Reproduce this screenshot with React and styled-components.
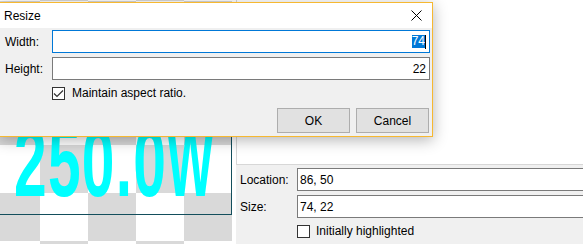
import React from "react";
import styled, { createGlobalStyle } from "styled-components";

const Global = createGlobalStyle`
  body {
    margin: 0;
    background: #ffffff;
  }
  * {
    box-sizing: border-box;
  }
`;

const Screen = styled.div`
  position: relative;
  width: 583px;
  height: 244px;
  overflow: hidden;
  display: flex;
  font-family: "Liberation Sans", Arial, sans-serif;
  font-size: 12px;
  color: #000;
`;

/* designer surface with the transparency checkerboard */
const Canvas = styled.div`
  position: relative;
  width: 232px;
  flex: none;
  background-color: #ffffff;
  background-image: repeating-conic-gradient(#d9d9d9 0 25%, #ffffff 0 50%);
  background-size: 96px 96px;
  background-position: 88px 49px;
`;

const Splitter = styled.div`
  width: 4px;
  flex: none;
  background: #ffffff;
`;

const LabelBox = styled.div`
  position: absolute;
  left: -2px;
  top: 60px;
  width: 234px;
  height: 155px;
  border: 1px solid #134e5c;
`;

const BigText = styled.span`
  position: absolute;
  left: 15px;
  top: 52px;
  font-family: "Liberation Sans", Arial, sans-serif;
  font-weight: 700;
  font-size: 98px;
  line-height: 1;
  letter-spacing: 2px;
  color: #00ffff;
  white-space: nowrap;
  transform: scaleX(0.6);
  transform-origin: left top;
`;

const NarrowGlyph = styled.span`
  display: inline-block;
  transform: scaleX(0.84);
  transform-origin: left center;
`;

const Panel = styled.div`
  flex: 1;
  display: flex;
  flex-direction: column;
  background: #f0f0f0;
  min-width: 0;
`;

const PreviewBox = styled.div`
  height: 165px;
  flex: none;
  background: #ffffff;
  border-left: 1px solid #d7d7d7;
  border-bottom: 1px solid #d7d7d7;
`;

const FieldGrid = styled.div`
  display: grid;
  grid-template-columns: ${(p) => p.$label}px 1fr;
  row-gap: 4px;
  align-items: center;
  padding: ${(p) => p.$pad};
`;

const FieldLabel = styled.label`
  white-space: nowrap;
`;

const TextBox = styled.div`
  height: 23px;
  display: flex;
  align-items: center;
  justify-content: ${(p) => (p.$right ? "flex-end" : "flex-start")};
  padding: 0 3px 0 2px;
  background: #ffffff;
  border: 1px solid ${(p) => (p.$focused ? "#0078d7" : "#7a7a7a")};
  width: ${(p) => (p.$wide ? "320px" : "auto")};
  white-space: nowrap;
`;

const Selected = styled.span`
  background: #0078d7;
  color: #ffffff;
  line-height: 13px;
  padding: 0;
`;

const Caret = styled.span`
  width: 1px;
  height: 14px;
  background: #000;
`;

const CheckRow = styled.div`
  grid-column: 2;
  display: flex;
  align-items: center;
  gap: ${(p) => p.$gap}px;
  margin-top: 2px;
`;

const Box = styled.span`
  width: 13px;
  height: 13px;
  flex: none;
  border: 1px solid #333333;
  background: #ffffff;
  display: flex;
  align-items: center;
  justify-content: center;
`;

const Dialog = styled.div`
  position: absolute;
  left: -1px;
  top: 2px;
  width: 434px;
  height: 135px;
  display: flex;
  flex-direction: column;
  border: 1px solid #f6b831;
  background: #f0f0f0;
  box-shadow: 0 3px 14px rgba(0, 0, 0, 0.3);
`;

const TitleBar = styled.div`
  height: 25px;
  flex: none;
  display: flex;
  align-items: center;
  justify-content: space-between;
  padding: 0 10px 0 4px;
  background: #ffffff;
`;

const Body = styled.div`
  flex: 1;
  display: flex;
  flex-direction: column;
  padding: 2px 2px 3px 5px;
`;

const ButtonRow = styled.div`
  margin-top: auto;
  display: flex;
  justify-content: flex-end;
  gap: 6px;
  padding-right: 1px;
`;

const Button = styled.button`
  width: 73px;
  height: 25px;
  border: 1px solid #adadad;
  background: #e1e1e1;
  font: inherit;
  color: #000;
  padding: 0;
`;

const Check = () => (
  <svg width="11" height="11" viewBox="0 0 11 11">
    <path d="M1 5.5 L4 8.5 L10 2.5" fill="none" stroke="#333" strokeWidth="1.2" />
  </svg>
);

const CloseIcon = () => (
  <svg width="11" height="11" viewBox="0 0 11 11">
    <path d="M0.5 0.5 L10.5 10.5 M10.5 0.5 L0.5 10.5" stroke="#000" strokeWidth="1" />
  </svg>
);

export default function App() {
  return (
    <>
      <Global />
      <Screen>
        <Canvas>
          <LabelBox>
            <BigText>
              250.0<NarrowGlyph>W</NarrowGlyph>
            </BigText>
          </LabelBox>
        </Canvas>
        <Splitter />
        <Panel>
          <PreviewBox />
          <FieldGrid $label={57} $pad="3px 0 0 4px">
            <FieldLabel>Location:</FieldLabel>
            <TextBox $wide>86, 50</TextBox>
            <FieldLabel>Size:</FieldLabel>
            <TextBox $wide>74, 22</TextBox>
            <CheckRow $gap={6}>
              <Box />
              <span>Initially highlighted</span>
            </CheckRow>
          </FieldGrid>
        </Panel>

        <Dialog>
          <TitleBar>
            <span>Resize</span>
            <CloseIcon />
          </TitleBar>
          <Body>
            <FieldGrid $label={47} $pad="0">
              <FieldLabel>Width:</FieldLabel>
              <TextBox $focused $right>
                <Selected>74</Selected>
                <Caret />
              </TextBox>
              <FieldLabel>Height:</FieldLabel>
              <TextBox $right>22</TextBox>
              <CheckRow $gap={7}>
                <Box>
                  <Check />
                </Box>
                <span>Maintain aspect ratio.</span>
              </CheckRow>
            </FieldGrid>
            <ButtonRow>
              <Button>OK</Button>
              <Button>Cancel</Button>
            </ButtonRow>
          </Body>
        </Dialog>
      </Screen>
    </>
  );
}
